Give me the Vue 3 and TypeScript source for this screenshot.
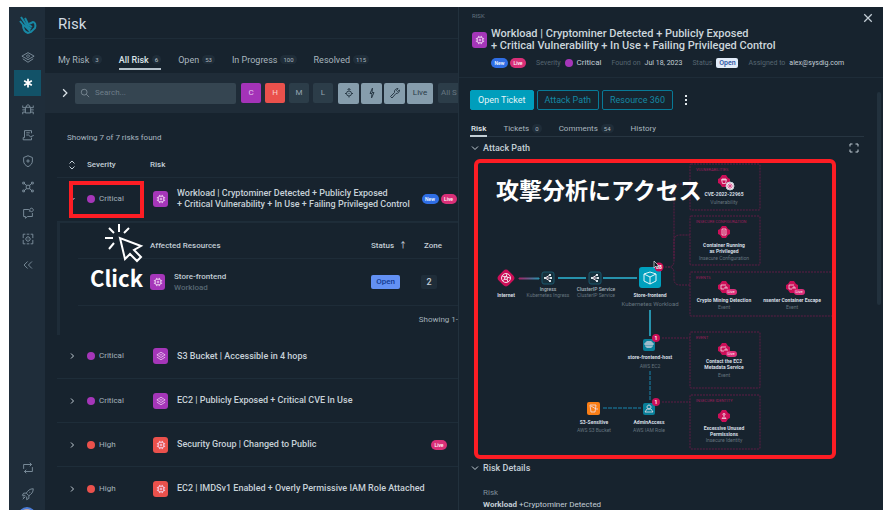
<script setup lang="ts">
import { ref } from 'vue'

interface Tab { name: string; count?: number }
interface Risk { severity: 'Critical' | 'High'; icon: 'chip' | 'layers'; title: string[]; tags: string[] }
interface Finding { x: number; y: number; label: string[]; labelY: number; kind: string; kindY: number; glyph: string; live?: boolean }

const tabs: Tab[] = [
  { name: 'My Risk', count: 3 },
  { name: 'All Risk', count: 6 },
  { name: 'Open', count: 53 },
  { name: 'In Progress', count: 100 },
  { name: 'Resolved', count: 115 },
]
const activeTab = ref('All Risk')

const detailTabs: Tab[] = [
  { name: 'Risk' },
  { name: 'Tickets', count: 0 },
  { name: 'Comments', count: 54 },
  { name: 'History' },
]
const activeDetail = ref('Risk')
const query = ref('')

const navIcons: { name: string; d: string }[] = [
  { name: 'Home', d: 'M1 7 8 3l7 4-7 4zM2 10l6 4 6-4M8 5.500a1.500 1.500 0 1 0 .01 0' },
  { name: 'Risk', d: 'M8 3v10M3.600 5.500l8.800 5M12.400 5.500l-8.800 5' },
  { name: 'Threats', d: 'M5 6h6v6.500H5zM6 6V4.500L8 3l2 1.500V6M2 4v2.500h3M14 4v2.500h-3M1.500 9H5M14.500 9H11M2 14v-2.500h3M14 14v-2.500h-3' },
  { name: 'Reports', d: 'M12 6V3H4v8M4 11H2.500v2.500H12V11M6 5.500h4M6 8h3M9 8.500l2 1.500 3.500-1.500' },
  { name: 'Posture', d: 'M8 2l5 2v4c0 3-2 5-5 6.500C5 13 3 11 3 8V4zM8 6v4M6 8h4' },
  { name: 'Network', d: 'M6 6h4v4H6zM6 6 4 4M10 6l2-2M6 10l-2 2M10 10l2 2M2 2.500h2v2H2zM12 2.500h2v2h-2zM2 11.500h2v2H2zM12 11.500h2v2h-2z' },
  { name: 'Insights', d: 'M9 4H3v8h2v2L7.500 12H13V8M12 2.500a2 2 0 1 0 .01 0M9 6l1.500-.5' },
  { name: 'Inventory', d: 'M5 2.500H2.500V7M2.500 9v4.500H5M11 2.500h2.500V7M13.500 9v4.500H11M6.500 2.500h3M6.500 13.500h3M8 5.500a2.500 2.500 0 1 0 .01 0M8 7.500v1' },
  { name: 'Collapse', d: 'M7.500 4 3.500 8l4 4M12.500 4l-4 4 4 4' },
]

const risks: Risk[] = [
  { severity: 'Critical', icon: 'chip', title: ['Workload | Cryptominer Detected + Publicly Exposed', '+ Critical Vulnerability + In Use + Failing Privileged Control'], tags: ['New', 'Live'] },
  { severity: 'Critical', icon: 'layers', title: ['S3 Bucket | Accessible in 4 hops'], tags: [] },
  { severity: 'Critical', icon: 'layers', title: ['EC2 | Publicly Exposed + Critical CVE In Use'], tags: [] },
  { severity: 'High', icon: 'chip', title: ['Security Group | Changed to Public'], tags: ['Live'] },
  { severity: 'High', icon: 'chip', title: ['EC2 | IMDSv1 Enabled + Overly Permissive IAM Role Attached'], tags: [] },
]

const glyphs: Record<string, string> = {
  chip: 'M5 4.500h6l.5.500v6l-.5.500H5l-.5-.5V5zM7 7h2v2H7zM6 4.500V2.500M8 4.500V2.500M10 4.500V2.500M6 13.500v-2M8 13.500v-2M10 13.500v-2M4.500 6h-2M4.500 8h-2M4.500 10h-2M13.500 6h-2M13.500 8h-2M13.500 10h-2',
  layers: 'M2.500 6.500 8 3l5.500 3.500L8 10zM2.500 9.500 8 13l5.500-3.500M6 6.500h4',
}

const groups = [
  { x: 216, y: 5, w: 70, h: 46, title: 'VULNERABILITIES' },
  { x: 216, y: 57, w: 70, h: 49, title: 'INSECURE CONFIGURATION' },
  { x: 216, y: 113, w: 160, h: 44, title: 'EVENTS' },
  { x: 216, y: 173, w: 70, h: 56, title: 'EVENT' },
  { x: 216, y: 236, w: 70, h: 54, title: 'INSECURE IDENTITY' },
]

const shapes: Record<string, string> = {
  star: 'M-2.500-1.500H2.500L1.500 2.500H-1.500zM-1-3V0M1-3V0',
  doc: 'M-2-3H2V3H-2zM-1-1H1M-1 1H1',
  event: 'M2-2H-3V2H0M1 0H3V2M1 0V2',
  user: 'M0-2.500a1 1 0 1 0 .01 0M-2 2.500Q0-1 2 2.500z',
}

const findings: Finding[] = [
  { x: 250, y: 22, label: ['CVE-2022-22965'], labelY: 37, kind: 'Vulnerability', kindY: 45, glyph: 'star' },
  { x: 250, y: 73, label: ['Container Running', 'as Privileged'], labelY: 88, kind: 'Insecure Configuration', kindY: 101, glyph: 'doc' },
  { x: 250, y: 128, label: ['Crypto Mining Detection'], labelY: 143, kind: 'Event', kindY: 150, glyph: 'event', live: true },
  { x: 318, y: 128, label: ['nsenter Container Escape'], labelY: 143, kind: 'Event', kindY: 150, glyph: 'event', live: true },
  { x: 250, y: 190, label: ['Contact the EC2', 'Metadata Service'], labelY: 204, kind: 'Event', kindY: 218, glyph: 'event', live: true },
  { x: 250, y: 257, label: ['Excessive Unused', 'Permissions'], labelY: 271, kind: 'Insecure Identity', kindY: 283, glyph: 'user' },
]
</script>

<template>
  <div class="page">
    <div class="window">
      <nav class="sidebar" aria-label="Primary">
        <svg class="logo" viewBox="0 0 18 20" aria-hidden="true">
          <path d="M2 2 8 11M6 3l4 8M1 6l4 5" />
          <path d="M4 10c0 4 2 7 5 8l3-1 4-4c1-3 0-6-2-6l-4 2M5 10l6 6M8 11l4 3M10 10l3 2" />
        </svg>
        <div class="nav-list">
          <button v-for="i in navIcons" :key="i.name" class="nav" :class="{ current: i.name === 'Risk' }" :aria-label="i.name">
            <svg viewBox="0 0 16 16"><path :d="i.d" /></svg>
          </button>
        </div>
        <div class="nav-foot">
          <button class="nav" aria-label="Sync"><svg viewBox="0 0 16 16"><path d="M3 9V4h9M10 2l2 2-2 2M13 7v5H4M6 10l-2 2 2 2" /></svg></button>
          <button class="nav" aria-label="Get started"><svg viewBox="0 0 16 16"><path d="M14 2c-4 0-6 2-8 5l3 3c3-2 5-4 5-8zM6 7H3L1.500 9.500H5M9 10v3l-2.500 1.500V11M10 5.500v1M2 14l3-3M2 11.500h2" /></svg></button>
          <span class="avatar"></span>
        </div>
      </nav>

      <main class="main">
        <header class="title"><h1>Risk</h1></header>
        <div class="tabs">
          <button v-for="t in tabs" :key="t.name" class="tab" :class="{ on: activeTab === t.name }" @click="activeTab = t.name">
            {{ t.name }}<span class="count">{{ t.count }}</span>
          </button>
        </div>
        <div class="toolbar">
          <button class="expand" aria-label="Show filters"><svg viewBox="0 0 8 8"><path d="M2.500 1l3 3-3 3" /></svg></button>
          <label class="search">
            <svg viewBox="0 0 12 12"><circle cx="5" cy="5" r="3.500" /><path d="M7.500 7.500 11 11" /></svg>
            <input v-model="query" type="text" placeholder="Search..." aria-label="Search risks" />
          </label>
          <div class="levels">
            <button class="chip crit">C</button>
            <button class="chip high">H</button>
            <button class="chip">M</button>
            <button class="chip">L</button>
          </div>
          <div class="toggles">
            <button class="chip lit" aria-label="Exposed"><svg viewBox="0 0 12 12"><circle cx="6" cy="6.500" r="2.500" /><path d="M6 1.500v2M4.500 3 6 1.500 7.500 3M2 6.500h1.500M8.500 6.500H10M6 9v1.500M6 6v1" /></svg></button>
            <button class="chip lit" aria-label="In use"><svg viewBox="0 0 12 12"><path d="M6.500 1 4 6.500H6L5.500 11 8 5.500H6z" /></svg></button>
            <button class="chip lit" aria-label="Fix available"><svg viewBox="0 0 12 12"><path d="M1.500 9.500 5.500 5.500C5 3 7 1.500 9 1.500L7.500 3.500 8.500 4.500 10.500 3C10.500 5.500 9 6.500 7 6.500L3 11z" /></svg></button>
            <button class="chip lit wide">Live</button>
          </div>
          <button class="chip all">All S</button>
        </div>

        <section class="content">
          <p class="summary">Showing 7 of 7 risks found</p>
          <table class="risks">
            <colgroup><col class="c-toggle" /><col class="c-sev" /><col /><col class="c-tags" /></colgroup>
            <thead>
              <tr>
                <th class="mid"><svg class="sort" viewBox="0 0 8 10"><path d="M1.500 3.500 4 1l2.500 2.500M1.500 6.500 4 9l2.500-2.500" /></svg></th>
                <th>Severity</th><th>Risk</th><th></th>
              </tr>
            </thead>
            <tbody>
              <template v-for="(r, n) in risks" :key="n">
                <tr class="risk">
                  <td class="mid">
                    <button class="chev" aria-label="Toggle details">
                      <svg viewBox="0 0 8 8"><path :d="n === 0 ? 'M1.500 3 4 5.500 6.500 3' : 'M3 1.500 5.500 4 3 6.500'" /></svg>
                    </button>
                  </td>
                  <td><span class="sev"><i class="dot" :class="r.severity.toLowerCase()"></i>{{ r.severity }}</span></td>
                  <td>
                    <div class="name">
                      <span class="tile" :class="r.severity.toLowerCase()"><svg viewBox="0 0 16 16"><path :d="glyphs[r.icon]" /></svg></span>
                      <span><span v-for="l in r.title" :key="l" class="line">{{ l }}</span></span>
                    </div>
                  </td>
                  <td><div class="tags"><span v-for="t in r.tags" :key="t" class="pill" :class="t.toLowerCase()">{{ t }}</span></div></td>
                </tr>
                <tr v-if="n === 0">
                  <td colspan="4">
                    <div class="nested">
                      <table class="resources">
                        <colgroup><col /><col class="c-status" /><col class="c-zone" /></colgroup>
                        <thead><tr><th class="first">Affected Resources</th><th>Status <span class="up">↑</span></th><th class="zone-head">Zone</th></tr></thead>
                        <tbody>
                          <tr>
                            <td class="first">
                              <div class="resource">
                                <span class="tile critical"><svg viewBox="0 0 16 16"><path :d="glyphs.chip" /></svg></span>
                                <span><b>Store-frontend</b><small>Workload</small></span>
                              </div>
                            </td>
                            <td><span class="status">Open</span></td>
                            <td><span class="zone">2</span></td>
                          </tr>
                        </tbody>
                      </table>
                      <p class="range">Showing 1-</p>
                    </div>
                  </td>
                </tr>
              </template>
            </tbody>
          </table>
        </section>

        <div class="mark-severity"></div>
        <div class="click">
          <svg viewBox="0 0 40 40"><path d="M15 14 20 35l5-5 7 7 4-4-7-7 7-4zM14 0v8M24 4l-5 5M4 4l5 5M0 14h8M9 19l-5 6" /></svg>
          <span>Click</span>
        </div>
      </main>

      <aside class="panel">
        <header class="head">
          <p class="crumb">RISK</p>
          <button class="close" aria-label="Close"><svg viewBox="0 0 8 8"><path d="M1 1l6 6M7 1 1 7" /></svg></button>
          <div class="heading">
            <span class="tile critical"><svg viewBox="0 0 16 16"><path :d="glyphs.chip" /></svg></span>
            <h2>Workload | Cryptominer Detected + Publicly Exposed<br />+ Critical Vulnerability + In Use + Failing Privileged Control</h2>
          </div>
          <div class="meta">
            <span class="set tight"><span class="pill new">New</span><span class="pill live">Live</span></span>
            <span class="set"><em>Severity</em><i class="dot critical"></i><span class="value">Critical</span></span>
            <span class="set"><em>Found on</em>Jul 18, 2023</span>
            <span class="set"><em>Status</em><span class="open">Open</span></span>
            <span class="set"><em>Assigned to</em>alex@sysdig.com</span>
          </div>
        </header>

        <div class="scroll">
          <div class="body">
            <div class="actions">
              <button class="act primary">Open Ticket</button>
              <button class="act">Attack Path</button>
              <button class="act">Resource 360</button>
              <button class="more" aria-label="More"><svg viewBox="0 0 4 12"><path d="M1 1h2v2H1zM1 5h2v2H1zM1 9h2v2H1z" /></svg></button>
            </div>
            <div class="dtabs">
              <button v-for="t in detailTabs" :key="t.name" class="dtab" :class="{ on: activeDetail === t.name }" @click="activeDetail = t.name">
                {{ t.name }}<span v-if="t.count !== undefined" class="count">{{ t.count }}</span>
              </button>
            </div>
            <div class="fold">
              <svg viewBox="0 0 8 8"><path d="M1 2.500 4 5.500 7 2.500" /></svg>
              <h3>Attack Path</h3>
              <button class="full" aria-label="Full screen"><svg viewBox="0 0 10 10"><path d="M1 3.500V1h2.500M6.500 1H9v2.500M9 6.500V9H6.500M3.500 9H1V6.500" /></svg></button>
            </div>

            <div class="graph">
              <svg class="canvas" viewBox="0 0 362 300" role="img" aria-label="Attack path from the internet to Store-frontend">
                <defs>
                  <linearGradient id="entry" gradientUnits="userSpaceOnUse" x1="45" y1="0" x2="65" y2="0"><stop offset="0" stop-color="#a32568" /><stop offset="1" stop-color="#2792ac" /></linearGradient>
                </defs>
                <g class="dotted">
                  <rect v-for="g in groups" :key="g.title" :x="g.x" :y="g.y" :width="g.w" :height="g.h" rx="1" />
                  <path d="M191 108h3q6 0 6-6V31q0-6 6-6h10M200 100V82q0-6 6-6h10M194 108q6 0 6 6v6q0 6 6 6h10M188 179h28M188 243h28" />
                </g>
                <text v-for="g in groups" :key="g.title" class="group" :x="g.x + 6" :y="g.y + 7">{{ g.title }}</text>

                <path d="M45 119H65V120H45z" fill="url(#entry)" stroke="url(#entry)" />
                <path class="edge" d="M84 119h28M129 119h34M176 151v26" />
                <path class="edge dim" d="M176 212v29M129 249h38" />

                <rect class="magenta" x="25" y="112" width="14" height="14" rx="4" transform="rotate(45 32 119)" />
                <g class="ink"><circle cx="32" cy="119" r="4.500" /><circle cx="32" cy="119" r="1.500" /><path d="M28 117l4 1 1-3M33 120l1 3M31 120l-3 2M33 118l3 1" /></g>
                <text class="label" x="32" y="138">Internet</text>

                <g v-for="x in [74, 121]" :key="x">
                  <rect class="service" :x="x - 6" y="113" width="12" height="12" rx="2" />
                  <path class="ink" :d="`M${x - 3} 119l5-3M${x - 3} 119l5 3M${x - 3} 119h5`" />
                  <path class="inkfill" :d="`M${x - 4} 118h2v2h-2zM${x + 1} 115h2v2h-2zM${x + 1} 121h2v2h-2zM${x + 2} 118h2v2h-2z`" />
                </g>
                <text class="label soft" x="74" y="132">Ingress</text><text class="kind" x="74" y="138">Kubernetes Ingress</text>
                <text class="label soft" x="122" y="132">ClusterIP Service</text><text class="kind" x="122" y="138">ClusterIP Service</text>

                <rect class="hub" x="165" y="108" width="22" height="21" rx="3" />
                <path class="cube" d="M176 113l6 2v7l-6 3-6-3v-7zM170 115l6 3 6-3M176 118v7" />
                <circle class="magenta" cx="185" cy="108" r="4.500" /><text class="badge" x="185" y="110">28</text>
                <path class="pointer" d="M180 102v7l2-2 1 3 1-1-1-2h2z" />
                <text class="label" x="176" y="138">Store-frontend</text><text class="kind big" x="176" y="147">Kubernetes Workload</text>

                <rect class="node" x="169" y="180" width="12" height="12" rx="2" />
                <path class="ink thin" d="M172 183h6v5h-6zM170 185h10M174 182v7M176 182v7" />
                <circle class="magenta" cx="182" cy="179" r="4" /><text class="badge" x="182" y="181">1</text>
                <text class="label" x="176" y="200">store-frontend-host</text><text class="kind" x="176" y="209">AWS EC2</text>

                <rect class="node" x="169" y="244" width="12" height="12" rx="2" />
                <path class="ink thin" d="M175 246a2 2 0 1 0 .01 0M171 253h8l-2-3h-4z" />
                <circle class="magenta" cx="182" cy="243" r="4" /><text class="badge" x="182" y="245">1</text>
                <text class="label" x="175" y="265">AdminAccess</text><text class="kind" x="175" y="273">AWS IAM Role</text>

                <rect class="bucket" x="113" y="243" width="13" height="13" rx="2" />
                <path class="ink thin" d="M116 246h6l-1 7h-4zM117 247l5 3h2" />
                <text class="label" x="120" y="265">S3-Sensitive</text><text class="kind" x="120" y="273">AWS S3 Bucket</text>

                <g v-for="f in findings" :key="f.label[0]">
                  <g :transform="`translate(${f.x} ${f.y})`">
                    <path class="magenta" d="M-2-6H2L4-3 6-2V2L4 3 2 6H-2L-4 3-6 2V-2L-4-3z" />
                    <path class="ink thin" :d="shapes[f.glyph]" />
                    <g v-if="f.live"><rect class="livebg" x="2" y="2" width="11" height="6" rx="3" /><text class="livetext" x="7" y="6">Live</text></g>
                    <g v-if="f.glyph === 'star'"><circle cx="6" cy="5" r="4" fill="#f7e6ee" /><path class="virus" d="M4 3l4 4M8 3 4 7M6 2v6M3 5h6" /></g>
                  </g>
                  <text v-for="(l, k) in f.label" :key="l" class="label" :x="f.x" :y="f.labelY + k * 6">{{ l }}</text>
                  <text class="kind" :x="f.x" :y="f.kindY">{{ f.kind }}</text>
                </g>
              </svg>
              <p class="caption">攻撃分析にアクセス</p>
            </div>

            <div class="fold low">
              <svg viewBox="0 0 8 8"><path d="M1 2.500 4 5.500 7 2.500" /></svg>
              <h3>Risk Details</h3>
            </div>
            <dl class="details"><dt>Risk</dt><dd><b>Workload</b> +Cryptominer Detected</dd></dl>
          </div>
          <span class="thumb"></span>
        </div>
      </aside>
    </div>
  </div>
</template>

<style>
body { background: #fff; overflow: hidden; }
</style>

<style scoped>
* { box-sizing: border-box; }
.page { height: 100vh; padding: 7px 7px 7px 9px; font-family: Roboto, "Noto Sans CJK JP", sans-serif; font-size: 9px; line-height: 12px; color: #c3ced6; }
.window { display: grid; grid-template-columns: 36px minmax(0, 414fr) minmax(0, 424fr); height: 100%; overflow: hidden; background: #17232e; }
button { padding: 0; border: 0; background: none; font: inherit; color: inherit; cursor: pointer; }
h1, h2, h3, p, dl, dd { margin: 0; font-weight: 400; }
table { width: 100%; border-collapse: collapse; table-layout: fixed; }
th, td { padding: 0; text-align: left; font-weight: 500; }
svg { display: block; fill: none; stroke: currentColor; stroke-width: 1; }
em { font-style: normal; color: #566570; }

.sidebar { display: flex; flex-direction: column; min-height: 0; background: #1f2d3a; color: #8496a3; }
.logo { flex: none; width: 18px; height: 20px; margin: 8px 10px 9px; stroke: #1889a5; stroke-width: 2; }
.nav-list { flex: none; display: grid; grid-template-rows: repeat(9, 1fr); height: 231px; }
.nav { display: flex; align-items: center; justify-content: center; width: 27px; height: 26px; margin: 0 5px; }
.nav svg { width: 14px; height: 14px; }
.nav.current { background: #125268; color: #fff; }
.nav.current svg { stroke-width: 2; }
.nav-foot { display: flex; flex-direction: column; margin: auto 0 -15px; }
.avatar { width: 18px; height: 18px; margin: 0 9px; border: 2px solid #4b7dd8; border-radius: 9px; background: #c7a49a; }

.main { position: relative; display: flex; flex-direction: column; min-width: 0; overflow: hidden; border-right: 1px solid #22313d; }
.title { flex: none; display: flex; align-items: center; height: 32px; padding: 3px 13px 0; border-bottom: 1px solid #1e2c38; }
h1 { font-size: 15px; line-height: 18px; color: #d3dce2; }
.tabs { flex: none; display: flex; gap: 17px; height: 34px; padding: 0 13px; }
.tab { display: flex; align-items: center; gap: 3px; height: 30px; margin-top: 1px; padding-top: 11px; border-bottom: 2px solid transparent; white-space: nowrap; color: #a9b6bf; }
.tab.on { border-color: #b7c3cc; font-weight: 500; color: #dae2e7; }
.count { min-width: 9px; padding: 0 3px; border-radius: 5px; background: #1f2d39; font-size: 6px; line-height: 9px; text-align: center; color: #aab6bf; }
.toolbar { flex: none; display: flex; align-items: center; gap: 5px; height: 40px; padding-left: 15px; background: #1f2c38; overflow: hidden; }
.expand svg { width: 10px; height: 10px; stroke: #dce4e9; }
.search { flex: 1 1 161px; display: flex; align-items: center; gap: 5px; min-width: 60px; height: 21px; padding: 0 5px; border-radius: 2px; background: #354551; color: #7f8e99; }
.search svg { width: 10px; height: 10px; flex: none; }
.search input { width: 100%; min-width: 0; padding: 0; border: 0; outline: 0; background: none; font: inherit; font-size: 8px; color: #c3ced6; }
.search input::placeholder { color: #6d7d89; opacity: 1; }
.levels { display: flex; gap: 4px; }
.toggles { display: flex; gap: 2px; }
.chip { flex: none; display: flex; align-items: center; justify-content: center; width: 20px; height: 20px; border-radius: 2px; background: #2c3d49; font-size: 8px; color: #94a4af; }
.chip svg { width: 12px; height: 12px; }
.crit { background: #a433b8; color: #e5c5ee; }
.high { background: #ea514c; color: #f8cfcb; }
.lit { width: 21px; height: 21px; background: #869dac; color: #293a47; }
.wide { width: 26px; }
.all { justify-content: flex-start; width: 20px; padding-left: 3px; white-space: nowrap; color: #667681; border-radius: 2px 0 0 2px; }

.content { padding-left: 12px; }
.summary { height: 40px; padding: 19px 10px 0; font-size: 8px; color: #aab7c0; }
.c-toggle { width: 30px; } .c-sev { width: 63px; } .c-tags { width: 38px; }
.risks > thead tr { height: 24px; border-bottom: 1px solid #1e2c38; font-size: 8px; }
.risk { height: 44px; border-bottom: 1px solid #1e2d39; }
.mid svg { margin: 0 auto; }
.sort { width: 8px; height: 10px; }
.chev { display: block; margin: 0 auto; }
.chev svg { width: 8px; height: 8px; }
.sev { display: flex; align-items: center; gap: 4px; font-size: 8px; font-weight: 400; color: #a5b2bc; }
.dot { flex: none; width: 8px; height: 8px; border-radius: 4px; }
.critical { background: #a536b9; }
.high.dot, .high.tile { background: #ea514c; }
.tile { flex: none; display: flex; align-items: center; justify-content: center; width: 15px; height: 16px; border-radius: 3px; color: #f3d9f4; }
.tile svg { width: 12px; height: 12px; }
.name { display: flex; align-items: center; gap: 9px; padding-left: 3px; line-height: 11px; color: #c7d1d8; }
.line { display: block; white-space: nowrap; }
.tags { display: flex; justify-content: center; gap: 2px; }
.pill { width: 17px; height: 10px; border-radius: 5px; background: #2f6ee5; font-size: 5px; font-weight: 500; line-height: 10px; text-align: center; color: #fff; }
.pill.live { width: 16px; background: #d92f78; }
.nested { min-height: 113px; padding: 11px 0 0 18px; border-left: 3px solid #1e2c38; border-top: 1px solid #1e2c38; }
.c-status { width: 50px; } .c-zone { width: 37px; }
.resources thead tr { height: 25px; border-bottom: 1px solid #1e2c38; font-size: 8px; }
.resources tbody tr { height: 47px; border-bottom: 1px solid #1e2c38; }
.resources .first { padding-left: 72px; }
.zone-head { padding-left: 3px; }
.up { padding-left: 3px; }
.resource { display: flex; align-items: center; gap: 9px; font-size: 8px; line-height: 11px; }
.resource b, .resource small { display: block; font-size: 8px; font-weight: 500; }
.resource small { color: #586873; }
.status { display: block; width: 29px; height: 14px; border-radius: 2px; background: #6391f4; line-height: 14px; text-align: center; font-size: 8px; color: #123a91; }
.zone { display: block; width: 16px; height: 14px; border-radius: 2px; background: #1f2d39; line-height: 14px; text-align: center; }
.range { padding-top: 8px; text-align: right; white-space: nowrap; font-size: 8px; color: #a2b0ba; }
.mark-severity { position: absolute; left: 24px; top: 174px; width: 75px; height: 37px; border: 4px solid #fd1d24; }
.click { position: absolute; left: 45px; top: 217px; font-family: "Noto Sans CJK JP", sans-serif; font-size: 22px; font-weight: 700; line-height: 26px; color: #fff; }
.click svg { width: 40px; height: 40px; margin-left: 15px; stroke-width: 2; }

.panel { display: flex; flex-direction: column; min-width: 0; min-height: 0; }
.head { position: relative; flex: none; height: 71px; padding: 4px 13px 0; border-bottom: 1px solid #1e2c38; }
.crumb { font-size: 6px; line-height: 10px; color: #647480; }
.close { position: absolute; top: 6px; right: 10px; }
.close svg { width: 10px; height: 10px; }
.heading { display: flex; align-items: center; gap: 4px; padding-top: 7px; }
h2 { font-size: 11px; line-height: 12px; font-weight: 500; white-space: nowrap; color: #ccd6dc; }
.meta { display: flex; align-items: center; gap: 10px; padding: 6px 0 0 19px; font-size: 7px; line-height: 10px; white-space: nowrap; }
.set { display: flex; align-items: center; gap: 4px; }
.tight { gap: 2px; }
.value { font-size: 8px; }
.open { width: 22px; border-radius: 2px; background: #e2ecf9; font-weight: 500; text-align: center; color: #1d4f9f; }
.scroll { flex: 1; display: flex; min-height: 0; overflow: hidden; }
.body { flex: 1; min-width: 0; padding: 12px 13px 0 11px; }
.thumb { flex: none; width: 4px; height: 213px; margin: 14px 2px 0 0; border-radius: 2px; background: #22313d; }
.actions { display: flex; align-items: center; gap: 3px; }
.act { height: 20px; padding: 0 7px; border: 1px solid #087a97; border-radius: 2px; color: #1588a3; white-space: nowrap; }
.act.primary { border-color: #009ebc; background: #009ebc; color: #e3f4f7; }
.more { padding: 4px 8px; }
.more svg { width: 4px; height: 12px; fill: #e1e8ec; stroke: none; }
.dtabs { display: flex; gap: 15px; height: 27px; border-bottom: 1px solid #273541; font-size: 8px; }
.dtab { display: flex; align-items: center; gap: 3px; height: 27px; padding: 12px 1px 0; border-bottom: 2px solid transparent; color: #a9b6bf; }
.dtab.on { border-color: #c2ced5; font-weight: 500; color: #e0e7eb; }
.fold { display: flex; align-items: center; gap: 4px; height: 22px; padding-left: 1px; }
.fold.low { height: 17px; }
.fold svg { width: 8px; height: 8px; }
h3 { font-size: 9px; font-weight: 500; line-height: 12px; }
.full { margin-left: auto; padding-right: 5px; }
.full svg { width: 10px; height: 10px; }
.graph { position: relative; margin: 0 28px 0 4px; overflow: hidden; }
.graph::after { content: ""; position: absolute; inset: 0; border: 4px solid #fd1d24; border-radius: 6px; }
.canvas { width: 100%; height: auto; }
.caption { position: absolute; left: 22px; top: 17px; z-index: 1; font-size: 23px; line-height: 32px; font-weight: 700; white-space: nowrap; color: #fff; }
.details { padding: 11px 0 0 13px; font-size: 8px; }
.details dt { color: #7e8e99; }

.dotted { stroke: #5f1d45; stroke-dasharray: 2 1; }
.group { fill: #9b1e5a; stroke: none; font-size: 4px; }
.edge { stroke: #2792ac; stroke-width: 2; }
.edge.dim { stroke: #17546e; stroke-dasharray: 4 1; }
.magenta { fill: #cc0f58; stroke: none; }
.ink { stroke: #f3dfe8; }
.thin { stroke-width: .8; }
.inkfill { fill: #dce6ea; stroke: none; }
.service { fill: #17303c; stroke: #1b596c; }
.hub { fill: #00a0be; stroke: none; }
.cube { stroke: #e2f5f8; }
.pointer { fill: #111a22; stroke: #dfe6ea; stroke-width: .7; }
.node { fill: #087f99; stroke: none; }
.bucket { fill: #f97e16; stroke: none; }
.label, .kind, .badge, .livetext { stroke: none; text-anchor: middle; font-size: 5px; }
.label { fill: #d5dee3; font-weight: 700; }
.label.soft { fill: #a8b5bd; font-weight: 500; }
.kind { fill: #65747e; }
.kind.big { font-size: 6px; }
.badge { fill: #fff; font-weight: 700; }
.livebg { fill: #dc2f7b; stroke: none; }
.livetext { font-size: 4px; fill: #fff; }
.virus { stroke: #d3347b; stroke-width: .7; }
</style>
